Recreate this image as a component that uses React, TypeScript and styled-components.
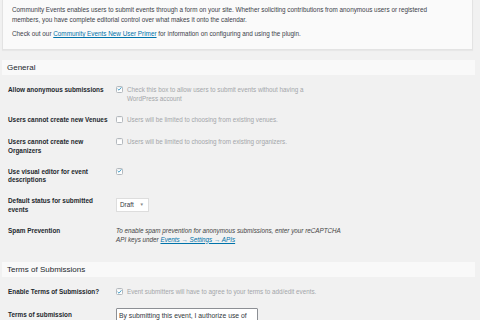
import React from 'react'
import styled, { createGlobalStyle } from 'styled-components'

const GlobalStyle = createGlobalStyle`
  html, body {
    margin: 0;
    padding: 0;
    background: #f1f1f1;
    font-family: "Liberation Sans", Arial, Helvetica, sans-serif;
    overflow: hidden;
  }
`

const Page = styled.div`
  width: 473px;
  padding-left: 2px;
`

const IntroPanel = styled.div`
  background: #fafafa;
  border: 1px solid #e3e3e3;
  border-top: 0;
  box-shadow: 0 1px 1px rgba(0, 0, 0, 0.04);
  padding: 5px 9px 10px;
  margin-right: 2px;
`

const IntroText = styled.p`
  margin: 0 0 5px;
  max-width: 440px;
  font-size: 6.35px;
  line-height: 9.5px;
  color: #3c434a;
  &:last-child {
    margin-bottom: 0;
  }
`

const Link = styled.a`
  color: #0073aa;
  text-decoration: underline;
`

const SectionTitle = styled.h3<{ $gap: number }>`
  margin: ${(p) => p.$gap}px 0 4.5px;
  height: 15px;
  padding: 0 5px;
  background: #f9f9f9;
  font-size: 8px;
  font-weight: normal;
  line-height: 15px;
  color: #23282d;
`

const FormTable = styled.div`
  display: flex;
  flex-direction: column;
`

const Row = styled.div`
  display: grid;
  grid-template-columns: 113px 1fr;
  align-items: start;
`

const Label = styled.div`
  padding: 6.5px 6px 6px 6px;
  font-size: 6.4px;
  font-weight: bold;
  line-height: 8.5px;
  color: #23282d;
`

const Field = styled.div`
  min-height: 10.5px;
  padding: 5.5px 0 6.5px 1px;
  display: flex;
  align-items: flex-start;
`

const Box = styled.span<{ $checked: boolean }>`
  flex: none;
  width: 7px;
  height: 7px;
  margin: 1px 4px 0 0;
  border: 1px solid #b4b9be;
  border-radius: 1.5px;
  background: #fefefe;
  box-shadow: inset 0 1px 1px rgba(0, 0, 0, 0.06);
  display: flex;
  align-items: center;
  justify-content: center;
  box-sizing: border-box;
  svg {
    display: ${(p) => (p.$checked ? 'block' : 'none')};
  }
`

const Hint = styled.span<{ $italic?: boolean }>`
  max-width: ${(p) => (p.$italic ? '236px' : '200px')};
  font-size: 6.3px;
  line-height: 9px;
  font-style: ${(p) => (p.$italic ? 'italic' : 'normal')};
  color: ${(p) => (p.$italic ? '#444' : '#a3a6a9')};
`

const SelectBox = styled.div`
  margin-top: 1.5px;
  width: 33px;
  height: 14px;
  box-sizing: border-box;
  border: 1px solid #ddd;
  background: #fff;
  display: flex;
  align-items: center;
  justify-content: space-between;
  padding: 0 4px 0 3px;
  font-size: 6.3px;
  color: #32373c;
  span {
    font-size: 4.5px;
    color: #888;
  }
`

const TextArea = styled.div`
  margin-top: -2px;
  width: 142px;
  height: 40px;
  box-sizing: border-box;
  border: 1px solid #8c8f94;
  border-radius: 1px;
  background: #fff;
  padding: 2px 2px;
  font-size: 6.8px;
  line-height: 9px;
  color: #32373c;
  white-space: nowrap;
  overflow: hidden;
`

const Checkbox = ({ checked }: { checked: boolean }) => (
  <Box $checked={checked}>
    <svg width="6" height="6" viewBox="0 0 10 10">
      <path
        d="M1.8 5.2 L4 7.4 L8.4 2.2"
        fill="none"
        stroke="#1e8cbe"
        strokeWidth="1.6"
        strokeLinecap="round"
        strokeLinejoin="round"
      />
    </svg>
  </Box>
)

const CheckRow = ({
  label,
  hint,
  checked,
}: {
  label: string
  hint?: string
  checked: boolean
}) => (
  <Row>
    <Label>{label}</Label>
    <Field>
      <Checkbox checked={checked} />
      {hint && <Hint>{hint}</Hint>}
    </Field>
  </Row>
)

export default function App() {
  return (
    <Page>
      <GlobalStyle />
      <IntroPanel>
        <IntroText>
          Community Events enables users to submit events through a form on your site. Whether
          soliciting contributions from anonymous users or registered members, you have complete
          editorial control over what makes it onto the calendar.
        </IntroText>
        <IntroText>
          Check out our <Link href="#">Community Events New User Primer</Link> for information on
          configuring and using the plugin.
        </IntroText>
      </IntroPanel>

      <SectionTitle $gap={10}>General</SectionTitle>
      <FormTable>
        <CheckRow
          checked
          label="Allow anonymous submissions"
          hint="Check this box to allow users to submit events without having a WordPress account"
        />
        <CheckRow
          checked={false}
          label="Users cannot create new Venues"
          hint="Users will be limited to choosing from existing venues."
        />
        <CheckRow
          checked={false}
          label="Users cannot create new Organizers"
          hint="Users will be limited to choosing from existing organizers."
        />
        <CheckRow checked label="Use visual editor for event descriptions" />
        <Row>
          <Label>Default status for submitted events</Label>
          <Field>
            <SelectBox>
              Draft <span>▼</span>
            </SelectBox>
          </Field>
        </Row>
        <Row>
          <Label>Spam Prevention</Label>
          <Field>
            <Hint $italic>
              To enable spam prevention for anonymous submissions, enter your reCAPTCHA API keys
              under <Link href="#">Events → Settings → APIs</Link>
            </Hint>
          </Field>
        </Row>
      </FormTable>

      <SectionTitle $gap={12}>Terms of Submissions</SectionTitle>
      <FormTable>
        <CheckRow
          checked
          label="Enable Terms of Submission?"
          hint="Event submitters will have to agree to your terms to add/edit events."
        />
        <Row>
          <Label>Terms of submission</Label>
          <Field>
            <TextArea>By submitting this event, I authorize use of</TextArea>
          </Field>
        </Row>
      </FormTable>
    </Page>
  )
}
